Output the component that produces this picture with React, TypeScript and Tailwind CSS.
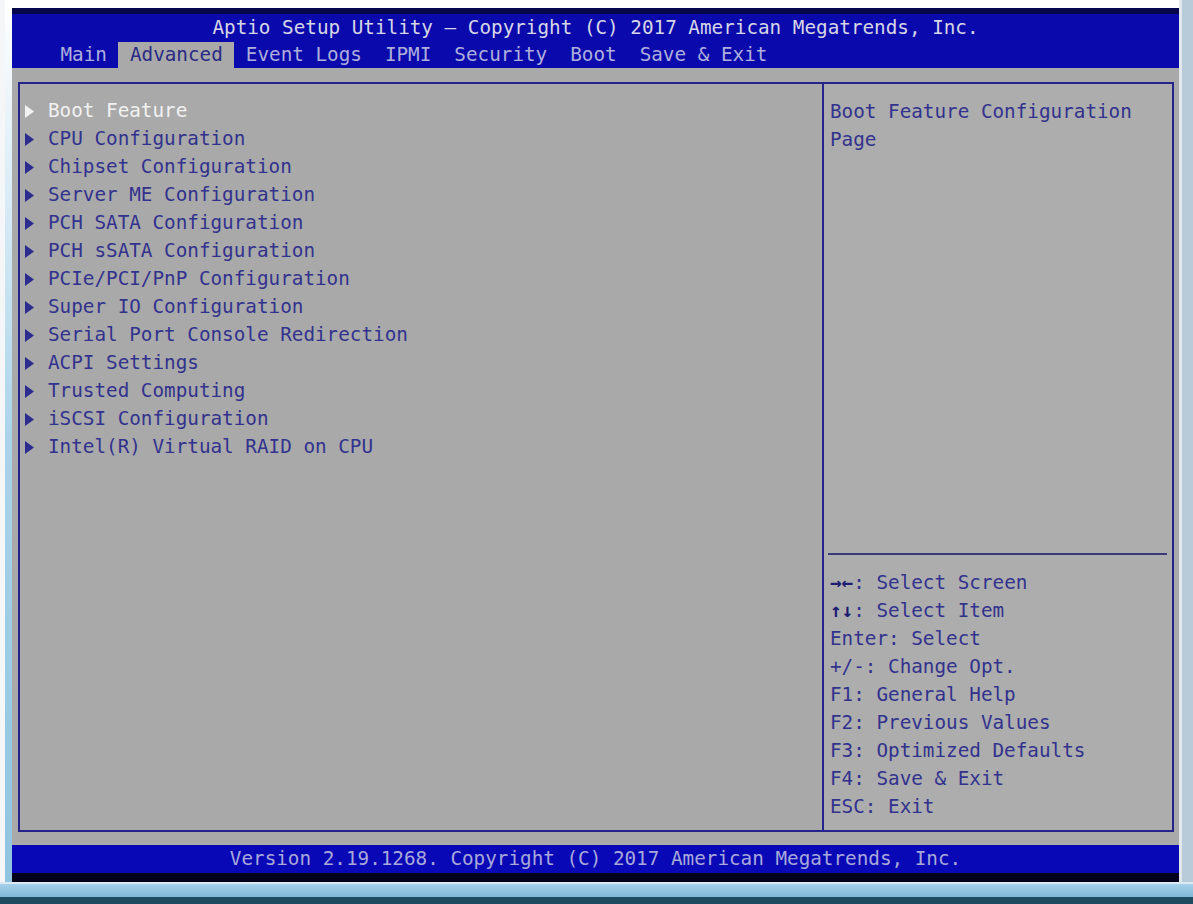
import React from "react";

const tabs = ["Main", "Advanced", "Event Logs", "IPMI", "Security", "Boot", "Save & Exit"];

const items = [
  "Boot Feature",
  "CPU Configuration",
  "Chipset Configuration",
  "Server ME Configuration",
  "PCH SATA Configuration",
  "PCH sSATA Configuration",
  "PCIe/PCI/PnP Configuration",
  "Super IO Configuration",
  "Serial Port Console Redirection",
  "ACPI Settings",
  "Trusted Computing",
  "iSCSI Configuration",
  "Intel(R) Virtual RAID on CPU",
];

// key glyphs drawn darker, rest of line in normal text colour
const help: [string, string][] = [
  ["→←", ": Select Screen"],
  ["↑↓", ": Select Item"],
  ["", "Enter: Select"],
  ["", "+/-: Change Opt."],
  ["", "F1: General Help"],
  ["", "F2: Previous Values"],
  ["", "F3: Optimized Defaults"],
  ["", "F4: Save & Exit"],
  ["", "ESC: Exit"],
];

const Arrow = ({ color }: { color: string }) => (
  <svg width="9" height="13" viewBox="0 0 9 13" className="shrink-0">
    <polygon points="0,0 9,6.5 0,13" fill={color} />
  </svg>
);

const App = () => {
  return (
    <div className="flex h-[904px] w-[1193px] flex-col overflow-hidden bg-white font-['DejaVu_Sans_Mono',monospace] text-[19.3px] leading-[28px]">
      <div className="flex h-[882px]">
        {/* window frame, left */}
        <div className="flex w-[12px]">
          <div className="w-[5px] bg-[#f4f6f8]" />
          <div className="w-[7px] bg-linear-to-b from-white via-[#a9d3ea] to-[#8fc4e0]" />
        </div>

        {/* bios screen */}
        <div className="flex w-[1167px] flex-col pt-[8px]">
          <div className="flex h-[60px] flex-col border-t-[6px] border-[#06064a] bg-[#0a0aac]">
            <p className="h-[28px] text-center text-[#d6d6e6]">
              Aptio Setup Utility – Copyright (C) 2017 American Megatrends, Inc.
            </p>
            <div className="flex h-[26px] pl-[37px] leading-[26px]">
              {tabs.map((t) => (
                <span
                  key={t}
                  className={
                    t === "Advanced"
                      ? "whitespace-pre bg-[#a9a9a9] px-[11.5px] text-[#2a2a86]"
                      : "whitespace-pre px-[11.5px] text-[#aeaedc]"
                  }
                >
                  {t}
                </span>
              ))}
            </div>
          </div>

          <div className="h-[777px] bg-[#a9a9a9] pb-[13px] pl-[6px] pr-[5px] pt-[14px]">
            <div className="flex h-full border-2 border-[#24248a]">
              <div className="w-[804px] border-r-2 border-[#24248a] pt-[13px]">
                {items.map((item, i) => (
                  <div key={item} className="flex h-[28px] items-center">
                    <div className="ml-[5px] mr-[14px]">
                      <Arrow color={i === 0 ? "#f2f2f2" : "#2c2c8e"} />
                    </div>
                    <span className={i === 0 ? "text-[#f2f2f2]" : "text-[#32328e]"}>{item}</span>
                  </div>
                ))}
              </div>

              <div className="flex flex-1 flex-col bg-[#adadad]">
                <div className="flex-1 pl-[6px] pt-[14px] text-[#32328e]">
                  <p>Boot Feature Configuration</p>
                  <p>Page</p>
                </div>
                <div className="ml-[4px] mr-[5px] h-[2px] bg-[#3a3a7a]" />
                <div className="pb-[9px] pl-[6px] pt-[14px] text-[#32328e]">
                  {help.map(([k, v]) => (
                    <p key={v} className="whitespace-pre">
                      {k && <span className="font-bold text-[#1c1c72]">{k}</span>}
                      {v}
                    </p>
                  ))}
                </div>
              </div>
            </div>
          </div>

          <div className="h-[28px] bg-[#0808b6] text-center text-[#a8a8da]">
            Version 2.19.1268. Copyright (C) 2017 American Megatrends, Inc.
          </div>
          <div className="h-[9px] bg-[#02021a]" />
        </div>

        {/* window frame, right */}
        <div className="flex w-[14px]">
          <div className="w-[3px] bg-[#e2e8ec]" />
          <div className="w-[11px] bg-[#b7cbd8]" />
        </div>
      </div>

      {/* window frame, bottom */}
      <div className="h-[2px] bg-[#dbe9f2]" />
      <div className="h-[13px] bg-linear-to-b from-[#a4d0ea] to-[#7fb6d6]" />
      <div className="h-[7px] bg-[#1d4b62]" />
    </div>
  );
};

export default App;
